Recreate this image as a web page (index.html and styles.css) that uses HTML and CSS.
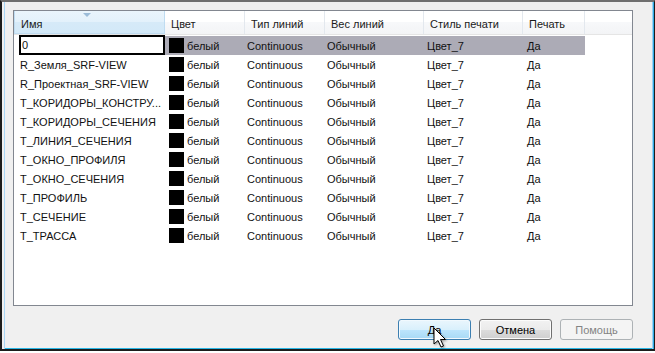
FILE: index.html
```html
<!DOCTYPE html>
<html lang="ru">
<head>
  <meta charset="UTF-8">
  <title>Слои</title>
  <link rel="stylesheet" href="styles.css">
</head>
<body>
  <div class="window">
    <div class="client">
      <div class="list">
        <div class="head">
          <div class="hcell c-name sorted"><span class="sort-arrow"></span>Имя</div>
          <div class="hcell c-color">Цвет</div>
          <div class="hcell c-type">Тип линий</div>
          <div class="hcell c-weight">Вес линий</div>
          <div class="hcell c-style">Стиль печати</div>
          <div class="hcell c-print">Печать</div>
          <div class="hcell c-fill"></div>
        </div>
        <div class="rows" id="rows"></div>
      </div>

      <div class="buttons">
        <button class="btn btn-default">Да</button>
        <button class="btn">Отмена</button>
        <button class="btn" disabled>Помощь</button>
      </div>
    </div>
  </div>

  <svg class="cursor" width="14" height="22" viewBox="0 0 14 22">
    <path d="M1 1 L1 17 L5 13.5 L8 20 L10.5 19 L7.5 12.5 L12.5 12.5 Z" fill="#fff" stroke="#000" stroke-width="1" stroke-linejoin="round"/>
  </svg>

  <script>
    const layers = [
      '0',
      'R_Земля_SRF-VIEW',
      'R_Проектная_SRF-VIEW',
      'T_КОРИДОРЫ_КОНСТРУ...',
      'T_КОРИДОРЫ_СЕЧЕНИЯ',
      'T_ЛИНИЯ_СЕЧЕНИЯ',
      'T_ОКНО_ПРОФИЛЯ',
      'T_ОКНО_СЕЧЕНИЯ',
      'T_ПРОФИЛЬ',
      'T_СЕЧЕНИЕ',
      'T_ТРАССА'
    ];

    const container = document.getElementById('rows');
    layers.forEach((name, i) => {
      const row = document.createElement('div');
      row.className = i === 0 ? 'row selected' : 'row';
      row.innerHTML = `
        <div class="cell c-name">${i === 0 ? '<span class="edit">' + name + '</span>' : name}</div>
        <div class="cell c-color"><span class="swatch"></span>белый</div>
        <div class="cell c-type">Continuous</div>
        <div class="cell c-weight">Обычный</div>
        <div class="cell c-style">Цвет_7</div>
        <div class="cell c-print">Да</div>
      `;
      container.appendChild(row);
    });
  </script>
</body>
</html>
```

FILE: styles.css
```css
* {
  box-sizing: border-box;
}

body {
  margin: 0;
  width: 655px;
  height: 353px;
  background: #fff;
  font-family: 'Liberation Sans', Arial, sans-serif;
  font-size: 11px;
  color: #000;
  overflow: hidden;
}

.window {
  width: 655px;
  height: 351px;
  border-style: solid;
  border-color: #6f6f6f #1c1c1c #1c1c1c #1c1c1c;
  border-width: 2px 1px 2px 2px;
  background: #f0f0f0;
}

.client {
  height: 100%;
  padding: 8px 0 0 11px;
  border-left: 1px solid #f0f0f0;
  box-shadow: inset 1px 0 0 #f0f0f0, inset 2px 0 0 #a9d6f5, inset -1px 0 0 #2fa8e4, inset -2px 0 0 #9bd3f3, inset 0 -1px 0 #29b7e6;
}

/* список слоёв */
.list {
  width: 620px;
  height: 296px;
  margin-left: -1px;
  border: 1px solid #828790;
  background: #fff;
}

.head {
  display: flex;
  height: 24px;
  border-bottom: 1px solid #e5e5e5;
  background: linear-gradient(#fff, #fff 50%, #f7f8fa 50%, #f3f4f6);
}

.hcell {
  position: relative;
  display: flex;
  align-items: center;
  padding: 3px 0 0 6px;
  border-right: 1px solid #e3e8ee;
  color: #1a1a1a;
}

.hcell.sorted {
  background: linear-gradient(#eaf5fc, #e3f1fb 50%, #d6eaf8 50%, #d3e9f8);
  border: 1px solid #bfdcf1;
  border-top: none;
}

.sort-arrow {
  position: absolute;
  top: 2px;
  left: 68px;
  width: 0;
  height: 0;
  border-left: 4px solid transparent;
  border-right: 4px solid transparent;
  border-top: 4px solid #9bbcd8;
}

.c-name { width: 151px; }
.c-color { width: 80px; }
.c-type { width: 80px; }
.c-weight { width: 99px; }
.c-style { width: 99px; }
.c-print { width: 62px; }
.c-fill { flex: 1; border-right: none; }

.rows {
  padding-top: 1px;
}

.row {
  display: flex;
  height: 19px;
}

.cell {
  display: flex;
  align-items: center;
  white-space: nowrap;
  padding-left: 2px;
  color: #111;
}

.row .c-name { padding-left: 6px; }
.row .c-color { padding-left: 4px; }
.row .c-style { padding-left: 3px; }
.row .c-print { padding-left: 4px; }

.row.selected .cell {
  background: #acabb6;
}

.row.selected .c-name {
  background: #fff;
  padding-left: 5px;
}

.edit {
  display: flex;
  align-items: center;
  width: 146px;
  height: 20px;
  padding-left: 1px;
  margin-top: -1px;
  border: 2px solid #000;
  background: #fff;
}

.swatch {
  display: inline-block;
  width: 15px;
  height: 15px;
  margin-right: 3px;
  background: #000;
}

/* кнопки */
.buttons {
  display: flex;
  justify-content: flex-end;
  gap: 8px;
  width: 620px;
  margin-top: 13px;
  margin-left: -1px;
}

.btn {
  width: 73px;
  height: 21px;
  padding: 0;
  border: 1px solid #707070;
  border-radius: 3px;
  background: linear-gradient(#f2f2f2, #ebebeb 50%, #dddddd 50%, #cfcfcf);
  font-family: 'Liberation Sans', Arial, sans-serif;
  font-size: 11px;
  color: #000;
  box-shadow: inset 0 0 0 1px #fcfcfc;
}

.btn-default {
  border-color: #3c7fb1;
  background: linear-gradient(#eaf6fd, #d9f0fc 50%, #bee6fd 50%, #a7d9f5);
  box-shadow: inset 0 0 0 1px #f1f9fe;
}

.btn:disabled {
  border-color: #adb2b5;
  background: #f4f4f4;
  color: #838383;
  box-shadow: none;
}

.cursor {
  position: absolute;
  left: 433px;
  top: 327px;
  filter: drop-shadow(1px 1px 1px rgba(0, 0, 0, 0.35));
}
```
